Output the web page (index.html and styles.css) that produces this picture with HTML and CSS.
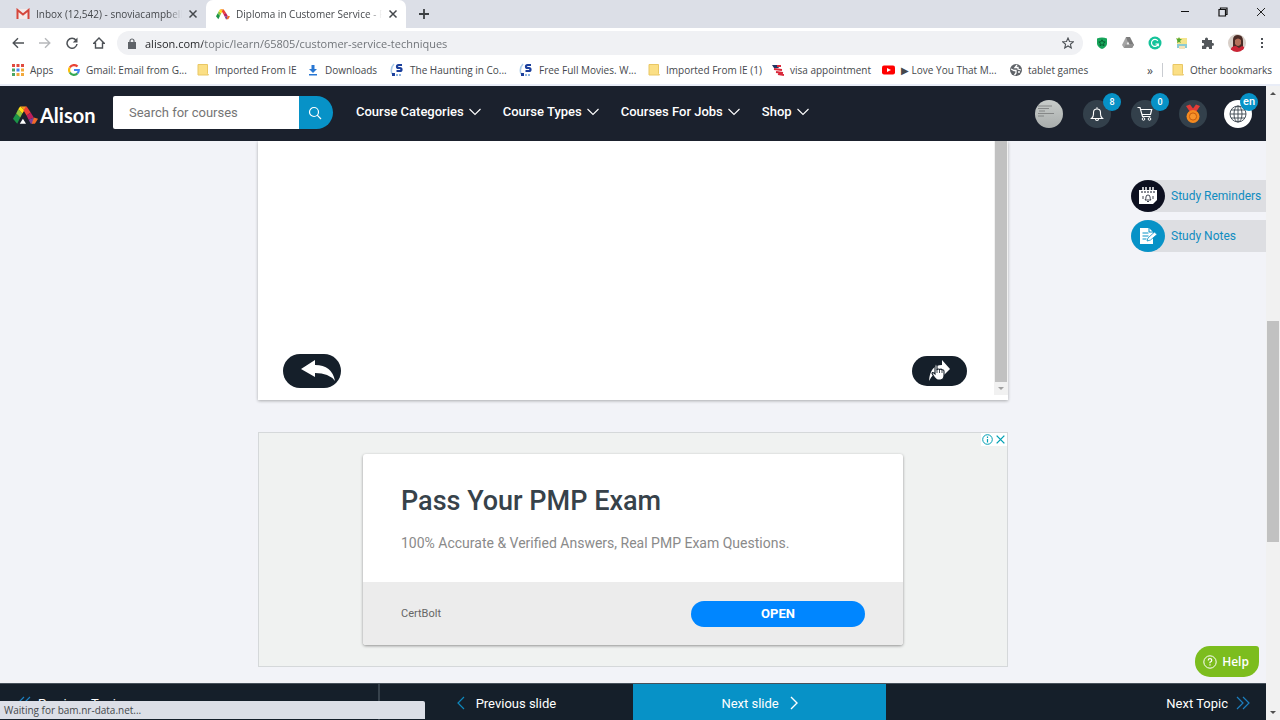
FILE: index.html
```
<!DOCTYPE html>
<html lang="en">
<head>
    <meta charset="UTF-8">
    <meta name="viewport" content="width=device-width, initial-scale=1.0">
    <title>Diploma in Customer Service</title>
    <link rel="stylesheet" href="styles.css">
</head>
<body>
    <!-- Shared symbols -->
    <svg class="symbols" aria-hidden="true">
        <symbol id="i-alison" viewBox="0 0 24 18">
            <path fill="#1b9447" d="M0 12l3-5 4 4-3 6z"/>
            <path fill="#8cc63f" d="M3 7l2-4 4 4-2 4z"/>
            <path fill="#ffde17" d="M5 3l2-3 4 4-2 3z"/>
            <path fill="#f7941e" d="M7 0h6l-2 4z"/>
            <path fill="#ef4136" d="M13 0l4 6-4 3-3-5z"/>
            <path fill="#be1e5b" d="M17 6l3 5-5 2-2-4z"/>
            <path fill="#7b3f98" d="M15 13l5-2-1 6h-2z"/>
            <path fill="#f26a2a" d="M20 11l4 1-3 5h-3z"/>
        </symbol>
        <symbol id="i-folder" viewBox="0 0 12 12">
            <path fill="#fbdf85" stroke="#e9c764" d="M1 .5h9.5v9l1 1.500H1z"/>
        </symbol>
        <symbol id="i-solar" viewBox="0 0 14 14">
            <path d="M4 1Q0 5 2 11" fill="none" stroke="#a9cbe8" stroke-width="1.500"/>
            <path d="M12 2H8.500Q7 2 7 3.500T8.500 5h1.500Q11.500 5 11.500 6.500T10 8H6.500" fill="none" stroke="#1b3f9c" stroke-width="2.200"/>
            <path fill="#1b3f9c" d="M2 10h3v3H2z"/>
            <path fill="#8fb6e0" d="M6 11h2v2H6zM9 11h2v2H9z"/>
        </symbol>
        <symbol id="i-down" viewBox="0 0 12 8">
            <path d="M.5 1L6 6.500 11.500 1" fill="none" stroke="currentColor" stroke-width="1.100"/>
        </symbol>
        <symbol id="i-close" viewBox="0 0 10 10">
            <path d="M1.500 1.500l7 7M8.500 1.500l-7 7" stroke="currentColor" stroke-width="1.500"/>
        </symbol>
    </svg>

    <!-- Browser chrome -->
    <div class="browser">
        <div class="tabs">
            <div class="tab">
                <svg width="14" height="12" viewBox="0 0 14 12"><path fill="#f3e9e8" d="M1 1h12v10H1z"/><path d="M1.500 11V2L7 6.500 12.500 2v9" fill="none" stroke="#d5463b" stroke-width="2"/></svg>
                <span class="tab-title">Inbox (12,542) - snoviacampbell@</span>
                <button class="tab-close" aria-label="Close tab"><svg width="10" height="10"><use href="#i-close"/></svg></button>
            </div>
            <div class="tab active">
                <svg width="14" height="11"><use href="#i-alison"/></svg>
                <span class="tab-title">Diploma in Customer Service - Re</span>
                <button class="tab-close" aria-label="Close tab"><svg width="10" height="10"><use href="#i-close"/></svg></button>
            </div>
            <button class="new-tab" aria-label="New tab"><svg width="12" height="12" viewBox="0 0 12 12"><path d="M6 1v10M1 6h10" stroke="#3c4043" stroke-width="1.800"/></svg></button>
            <div class="window-buttons">
                <button aria-label="Minimize"><svg width="10" height="10" viewBox="0 0 10 10"><path d="M1 4.500h8" stroke="#111"/></svg></button>
                <button aria-label="Restore"><svg width="10" height="10" viewBox="0 0 10 10"><path d="M1 2.500h6.500v6.500H1zM2.500 2.500V1h6.500v6.500H7.500" fill="none" stroke="#111" stroke-width="1.200"/></svg></button>
                <button aria-label="Close"><svg width="10" height="10" viewBox="0 0 10 10"><path d="M1 1l8 8M9 1L1 9" stroke="#222"/></svg></button>
            </div>
        </div>

        <div class="toolbar">
            <div class="history">
                <button aria-label="Back"><svg width="12" height="12" viewBox="0 0 12 12"><path d="M12 6H1.500M6 1.200L1.200 6 6 10.800" fill="none" stroke="#4d5156" stroke-width="1.400"/></svg></button>
                <button aria-label="Forward"><svg width="12" height="12" viewBox="0 0 12 12"><path d="M0 6h10.500M6 1.200L10.800 6 6 10.800" fill="none" stroke="#b6b8bb" stroke-width="1.400"/></svg></button>
                <button aria-label="Reload"><svg width="12" height="12" viewBox="0 0 12 12"><path d="M10 3.200A5 5 0 1 0 11 7" fill="none" stroke="#4d5156" stroke-width="1.500"/><path fill="#4d5156" d="M11.500.5v5H6.800z"/></svg></button>
                <button aria-label="Home"><svg width="12" height="12" viewBox="0 0 12 12"><path d="M.8 6.200L6 1l5.200 5.200H9.500V11h-7V6.200z" fill="none" stroke="#4d5156" stroke-width="1.400"/></svg></button>
            </div>
            <div class="address">
                <svg width="8" height="11" viewBox="0 0 8 11"><path fill="#5f6368" d="M0 4h8v7H0z"/><path d="M2 4.500V3a2 2 0 0 1 4 0v1.500" fill="none" stroke="#5f6368" stroke-width="1.200"/></svg>
                <input class="url" type="text" aria-label="Address" value="alison.com/topic/learn/65805/customer-service-techniques">
                <button aria-label="Bookmark this page"><svg width="12" height="12" viewBox="0 0 12 12"><path d="M6 1l1.500 3.500 3.800.3-2.900 2.500.9 3.700L6 9l-3.300 2 .9-3.700L.7 4.800l3.800-.3z" fill="none" stroke="#4d5156" stroke-width="1.100"/></svg></button>
            </div>
            <div class="extensions">
                <button aria-label="Shield"><svg width="12" height="12" viewBox="0 0 12 12"><path fill="#17a55b" d="M1 1.500Q6-.5 11 1.500V7q-1 3.500-5 5Q2 10.500 1 7z"/><path d="M6 2.800l1 2 2.200.2-1.600 1.500.4 2.200-2-1.100-2 1.100.4-2.200L2.800 5 5 4.800z" fill="none" stroke="#075e31"/></svg></button>
                <button aria-label="Drive"><svg width="12" height="12" viewBox="0 0 12 12"><path fill="#a5a5a5" d="M4 0h4L4 11H2L0 8z"/><path fill="#7b7b7b" d="M4 0h4l4 8-2 3H8z"/><path fill="#909090" d="M2 11l2-4h8l-2 4z"/><path fill="#eee" d="M6 4.500L7.500 7.500h-3z"/></svg></button>
                <button aria-label="Grammarly"><svg width="14" height="14" viewBox="0 0 14 14"><circle cx="7" cy="7" r="6.500" fill="#15c39a"/><path d="M9.800 4.800A3.500 3.500 0 1 0 10.300 8H7.500M10.300 7.500v2.800" fill="none" stroke="#fff" stroke-width="1.200"/></svg></button>
                <button aria-label="Pictures"><svg width="12" height="12" viewBox="0 0 12 12"><path fill="#f4e58d" d="M1 1h10v6H1z"/><path fill="#8ccbd3" d="M1 7h10v4H1z"/><path fill="#f3e3ba" d="M3 9h6v3H3z"/><path fill="#56a832" d="M0 1l2 1 1-2 1 2h2L4 4l1 2-2-1-2 1 .5-2z"/></svg></button>
                <button aria-label="Extensions"><svg width="12" height="12" viewBox="0 0 12 12"><path fill="#53575b" d="M0 3h3V2a1.500 1.500 0 0 1 3 0v1h4v3h.6a1.400 1.400 0 0 1 0 2.800H10V12H7v-.8a1.400 1.400 0 0 0-2.800 0v.8H0V8.800h.8a1.400 1.400 0 0 0 0-2.800H0z"/></svg></button>
                <button aria-label="Profile"><svg width="18" height="18" viewBox="0 0 18 18"><clipPath id="face"><circle cx="9" cy="9" r="9"/></clipPath><g clip-path="url(#face)"><path fill="#d8cfc8" d="M0 0h18v18H0z"/><path fill="#4a2b26" d="M5 14V6q0-5 5-5t5 6v7z"/><path fill="#b5705a" d="M7 6q3-3 6 0v4q-3 4-6 0z"/><path fill="#cc2436" d="M2 18q1-7 6-6l3 2 3-2q3 0 3 6z"/></g></svg></button>
                <button aria-label="Menu"><svg width="4" height="12" viewBox="0 0 4 12"><path fill="#4d5156" d="M1 1h2v2H1zM1 5h2v2H1zM1 9h2v2H1z"/></svg></button>
            </div>
        </div>

        <nav class="bookmarks" aria-label="Bookmarks">
            <a href="#"><svg width="12" height="12" viewBox="0 0 12 12"><path fill="#e04a3f" d="M0 0h3v3H0zM4.500 0h3v3h-3zM9 0h3v3H9z"/><path fill="#4aa564" d="M0 4.500h3v3H0z"/><path fill="#4285f4" d="M4.500 4.500h3v3h-3z"/><path fill="#f2a93b" d="M9 4.500h3v3H9zM4.500 9h3v3h-3zM9 9h3v3H9z"/><path fill="#4aa564" d="M0 9h3v3H0z"/></svg>Apps</a>
            <a href="#"><svg width="12" height="12" viewBox="0 0 12 12"><g fill="none" stroke-width="2.200"><path stroke="#ea4335" d="M1.800 3.500A4.800 4.800 0 0 1 9.500 2.600"/><path stroke="#fbbc05" d="M1.800 8.500a5 5 0 0 1 0-5"/><path stroke="#34a853" d="M9.500 9.300a4.800 4.800 0 0 1-7.700-.8"/><path stroke="#4285f4" d="M6 6h4.800q0 2-1.300 3.300"/></g></svg>Gmail: Email from G...</a>
            <a href="#"><svg width="12" height="12"><use href="#i-folder"/></svg>Imported From IE</a>
            <a href="#"><svg width="12" height="12" viewBox="0 0 12 12"><path fill="#2877d3" d="M4.500 1h3v4H10L6 9 2 5h2.500zM2 10h8v1.500H2z"/></svg>Downloads</a>
            <a href="#"><svg width="14" height="14"><use href="#i-solar"/></svg>The Haunting in Co...</a>
            <a href="#"><svg width="14" height="14"><use href="#i-solar"/></svg>Free Full Movies. W...</a>
            <a href="#"><svg width="12" height="12"><use href="#i-folder"/></svg>Imported From IE (1)</a>
            <a href="#"><svg width="12" height="12" viewBox="0 0 12 12"><path fill="#1e3565" d="M0 1h5l2 3H2z"/><path d="M5 2h4M2 5l8 1M4 8l7 1M6 10l6 1" stroke="#d9293b" stroke-width="1.800"/></svg>visa appointment</a>
            <a href="#"><svg width="13" height="12" viewBox="0 0 13 12"><rect y="1.500" width="13" height="9" rx="2" fill="#f00"/><path fill="#fff" d="M5 4l4 2-4 2z"/></svg>&#9654; Love You That M...</a>
            <a href="#"><svg width="12" height="12" viewBox="0 0 12 12"><circle cx="6" cy="6" r="6" fill="#5f6368"/><path d="M1 5l3 1.500h2V9L4.500 11M7 1L5 3.500h3V5l3 1M8 8h2" fill="none" stroke="#fff" stroke-width="1.300"/></svg>tablet games</a>
            <button class="more" aria-label="More bookmarks">&raquo;</button>
            <a class="other" href="#"><svg width="12" height="12"><use href="#i-folder"/></svg>Other bookmarks</a>
        </nav>
    </div>

    <div class="window">
        <div class="page">
            <header class="site-header">
                <a class="logo" href="#"><svg width="25" height="19" viewBox="0 0 24 18"><use href="#i-alison"/><path fill="#fff" d="M9.500 12l3 5h-6z"/></svg>Alison</a>
                <form class="search">
                    <input type="text" placeholder="Search for courses" aria-label="Search for courses">
                    <button type="button" aria-label="Search"><svg width="14" height="14" viewBox="0 0 14 14"><circle cx="6" cy="6" r="4.500" fill="none" stroke="#fff" stroke-width="1.200"/><path d="M9.200 9.200l3.800 3.800" stroke="#fff" stroke-width="1.200"/></svg></button>
                </form>
                <nav class="menu">
                    <a href="#">Course Categories<svg width="12" height="8"><use href="#i-down"/></svg></a>
                    <a href="#">Course Types<svg width="12" height="8"><use href="#i-down"/></svg></a>
                    <a href="#">Courses For Jobs<svg width="12" height="8"><use href="#i-down"/></svg></a>
                    <a href="#">Shop<svg width="12" height="8"><use href="#i-down"/></svg></a>
                </nav>
                <div class="account">
                    <button class="round avatar" aria-label="Profile"><svg width="28" height="28" viewBox="0 0 28 28"><path d="M3 6h14M3 8.500h11M4 11h6M3 13.500h16M3 16h6" stroke="#77797a" stroke-width=".8"/></svg></button>
                    <button class="round" aria-label="Notifications"><svg width="14" height="16" viewBox="0 0 14 16"><path d="M1.500 12.500q2-1.500 2-4.500V6.500Q3.500 3 7 3t3.500 3.500V8q0 3 2 4.500zM5.500 13a1.500 1.500 0 0 0 3 0M7 3V1.200" fill="none" stroke="#fff" stroke-width="1.100"/></svg><span class="badge">8</span></button>
                    <button class="round" aria-label="Cart"><svg width="16" height="16" viewBox="0 0 16 16"><path d="M.5 1.500h2.500l2.500 9h8M3.700 3.500h11L13.500 8.500H5" fill="none" stroke="#fff" stroke-width="1.200"/><circle cx="6.500" cy="13" r="1.300" fill="none" stroke="#fff"/><circle cx="12.500" cy="13" r="1.300" fill="none" stroke="#fff"/></svg><span class="badge">0</span></button>
                    <button class="round" aria-label="Awards"><svg width="16" height="20" viewBox="0 0 16 20"><path fill="#e23c37" d="M1 2l4-1.500 3 4 3-4L15 2l-4 6H5z"/><circle cx="8" cy="12.500" r="6.500" fill="#f58a1f"/><circle cx="8" cy="12.500" r="3.600" fill="#f7942b" stroke="#c65d10"/></svg></button>
                    <button class="round language" aria-label="Language"><svg width="18" height="18" viewBox="0 0 18 18"><g fill="none" stroke="#39434d" stroke-width=".9"><circle cx="9" cy="9" r="8"/><ellipse cx="9" cy="9" rx="4" ry="8"/><path d="M9 1v16M1 9h16M2 5h14M2 13h14"/></g></svg><span class="badge wide">en</span></button>
                </div>
            </header>

            <main class="content">
                <section class="slide">
                    <div class="slide-body">
                        <button class="turn back" aria-label="Back"><svg width="34" height="22" viewBox="0 0 34 22"><path fill="#fff" d="M0 9L14 0v5q17 0 20 16-6-8-20-8v4z"/></svg></button>
                        <button class="turn next" aria-label="Next"><svg width="26" height="26" viewBox="0 0 26 26"><path fill="#fff" d="M2 23Q3 7 15 7V2l8 9-8 8v-5Q6 14 2 23z"/><path fill="#fff" stroke="#151f2a" stroke-width="1.100" d="M8 7q1.500-1 2 .5v4q2-1 2.500 0 2-1 2.500.5 2-.5 2 1.500v4q0 4-3.500 4.500h-3Q8 21 5 15.500q0-1.500 2-.5l1 1z"/><path d="M10 11v4M12.500 12v3M15 12.500V15" stroke="#151f2a" stroke-width=".8"/></svg></button>
                    </div>
                    <div class="slide-scroll"><span></span><i class="arrow-down"></i></div>
                </section>

                <section class="ad">
                    <div class="ad-marks">
                        <button aria-label="Ad information"><svg width="11" height="11" viewBox="0 0 11 11"><circle cx="5.500" cy="5.500" r="4.800" fill="none" stroke="#00a0b4"/><path d="M5.500 5v3.500M5.500 2.500V4" stroke="#00a0b4" stroke-width="1.200"/></svg></button>
                        <button aria-label="Close ad"><svg width="11" height="11" viewBox="0 0 10 10"><path d="M1.500 1.500l7 7M8.500 1.500l-7 7" stroke="#00a0b4" stroke-width="1.200"/></svg></button>
                    </div>
                    <div class="ad-card">
                        <div class="ad-text">
                            <h2>Pass Your PMP Exam</h2>
                            <p>100% Accurate &amp; Verified Answers, Real PMP Exam Questions.</p>
                        </div>
                        <div class="ad-foot">
                            <span>CertBolt</span>
                            <button>OPEN</button>
                        </div>
                    </div>
                </section>
            </main>

            <nav class="slide-nav">
                <a class="first" href="#"><svg width="14" height="14" viewBox="0 0 14 14"><path d="M7 1L1 7l6 6M13 1L7 7l6 6" fill="none" stroke="#1c7fc0" stroke-width="1.200"/></svg>Previous Topic</a>
                <a href="#"><svg width="8" height="14" viewBox="0 0 8 14"><path d="M7 1L1 7l6 6" fill="none" stroke="#0f88bd" stroke-width="1.200"/></svg>Previous slide</a>
                <a class="current" href="#">Next slide<svg width="8" height="14" viewBox="0 0 8 14"><path d="M1 1l6 6-6 6" fill="none" stroke="#fff" stroke-width="1.400"/></svg></a>
                <a class="last" href="#">Next Topic<svg width="14" height="14" viewBox="0 0 14 14"><path d="M1 1l6 6-6 6M7 1l6 6-6 6" fill="none" stroke="#1c7fc0" stroke-width="1.200"/></svg></a>
            </nav>

            <div class="study">
                <a href="#"><span class="study-icon dark"><svg width="20" height="20" viewBox="0 0 20 20"><path fill="#fff" d="M1 4h18v10l-4 4H1z"/><path d="M5 1v4M8 1v4M12 1v4M15 1v4" stroke="#fff" stroke-width="1.500"/><path d="M3 6h14" stroke="#111627" stroke-width="1" stroke-dasharray="2 1"/><path d="M7 14q1-1 1-3t2-2 2 2 1 3zM9 15.500h2M5 10v3M15 10v3" fill="none" stroke="#111627" stroke-width=".8"/></svg></span>Study Reminders</a>
                <a href="#"><span class="study-icon"><svg width="18" height="18" viewBox="0 0 18 18"><path fill="#fff" d="M1 1h9l4 4v12H1z"/><path d="M3.500 6h6M3.500 9h6M3.500 12h4M10 1v4h4" fill="none" stroke="#0792c7"/><path fill="#fff" stroke="#0792c7" stroke-width=".8" d="M8 14l1-3 6.500-6L18 7.500 11.500 13z"/></svg></span>Study Notes</a>
            </div>

            <button class="help"><svg width="14" height="14" viewBox="0 0 14 14"><circle cx="7" cy="7" r="6.200" fill="none" stroke="#fff"/><path d="M5.200 5.500q0-1.800 1.800-1.800t1.800 1.500Q8.800 6.500 7 7.200v1M7 9.300v1.300" fill="none" stroke="#fff" stroke-width="1.200"/></svg>Help</button>
            <div class="status">Waiting for bam.nr-data.net...</div>
        </div>

        <div class="scrollbar">
            <i class="arrow-up"></i>
            <div class="track"><span></span></div>
            <i class="arrow-down dark"></i>
        </div>
    </div>
</body>
</html>
```
FILE: styles.css
```
/* Base styles */
* {
    box-sizing: border-box;
}

body {
    margin: 0;
    height: 100vh;
    display: flex;
    flex-direction: column;
    overflow: hidden;
    font-family: Roboto, "Liberation Sans", sans-serif;
    font-size: 13px;
    color: #fff;
}

a {
    color: inherit;
    text-decoration: none;
}

button {
    display: flex;
    align-items: center;
    justify-content: center;
    padding: 0;
    border: none;
    background: none;
    color: inherit;
    font: inherit;
    cursor: pointer;
}

svg {
    display: block;
    flex: none;
}

.symbols {
    display: none;
}

/* Browser chrome */
.browser {
    border-bottom: 2px solid #e9edf7;
    background: #fff;
    color: #45484c;
    font-family: "Open Sans", "Noto Sans", sans-serif;
    font-size: 10px;
}

.tabs {
    display: flex;
    height: 28px;
    padding-left: 8px;
    background: #dcdfe7;
}

.tab {
    display: flex;
    align-items: center;
    width: 198px;
    padding: 0 8px;
    gap: 6px;
}

.tab.active {
    width: 200px;
    padding-left: 10px;
    border-radius: 7px 7px 0 0;
    background: #fff;
}

.tab-title {
    flex: 1;
    overflow: hidden;
    white-space: nowrap;
    -webkit-mask-image: linear-gradient(90deg, #000 90%, transparent);
    mask-image: linear-gradient(90deg, #000 90%, transparent);
}

.new-tab {
    width: 36px;
}

.window-buttons {
    display: flex;
    align-items: center;
    gap: 28px;
    height: 24px;
    margin-left: auto;
    padding-right: 14px;
}

.toolbar {
    display: flex;
    align-items: center;
    height: 30px;
    padding: 0 16px 0 12px;
}

.history {
    display: flex;
    gap: 15px;
    margin-right: 12px;
}

.address {
    flex: 1;
    display: flex;
    align-items: center;
    gap: 9px;
    height: 24px;
    padding: 0 9px 0 11px;
    border-radius: 12px;
    background: #f0f1f4;
}

.url {
    flex: 1;
    padding: 0;
    border: none;
    outline: none;
    background: linear-gradient(90deg, #202124 58px, #6a6e73 58px);
    -webkit-background-clip: text;
    background-clip: text;
    color: transparent;
    font: inherit;
    font-size: 11px;
}

.extensions {
    display: flex;
    align-items: center;
    gap: 14px;
    margin-left: 13px;
}

.bookmarks {
    display: grid;
    grid-template-columns: 56px 129px 110px 83px 129px 129px 124px 110px 128px 1fr 24px 118px;
    align-items: center;
    height: 26px;
    padding: 0 0 2px 12px;
    white-space: nowrap;
}

.bookmarks a {
    display: flex;
    align-items: center;
    gap: 6px;
}

.bookmarks .other {
    height: 14px;
    padding-left: 9px;
    border-left: 1px solid #c9ccd1;
}

.more {
    font-size: 12px;
}

/* Window */
.window {
    flex: 1;
    display: flex;
    min-height: 0;
}

.page {
    position: relative;
    flex: 1;
    display: flex;
    flex-direction: column;
    min-width: 0;
    background: #f2f3f8;
}

.scrollbar {
    display: flex;
    flex-direction: column;
    align-items: center;
    justify-content: space-between;
    width: 14px;
    padding: 6px 0;
    background: #f1f1f1;
}

.track {
    flex: 1;
    display: flex;
    flex-direction: column;
    width: 12px;
}

.track::before {
    content: "";
    flex: 225;
}

.track::after {
    content: "";
    flex: 168;
}

.track span {
    flex: 220;
    background: #c1c1c1;
}

.arrow-up,
.arrow-down {
    border: 3px solid transparent;
}

.arrow-up {
    border-top: 0;
    border-bottom-color: #505050;
}

.arrow-down {
    border-bottom: 0;
    border-top-color: #a0a0a0;
}

.arrow-down.dark {
    border-top-color: #505050;
}

/* Site header */
.site-header {
    display: flex;
    align-items: center;
    height: 55px;
    padding: 0 14px 0 13px;
    background: #1b212d;
}

.logo {
    display: flex;
    align-items: center;
    gap: 2px;
    width: 100px;
    padding-top: 3px;
    font-family: Lato, sans-serif;
    font-size: 20px;
    font-weight: 700;
    line-height: 24px;
}

.search {
    display: flex;
    height: 33px;
    margin-bottom: 2px;
}

.search input {
    width: 186px;
    padding: 0 16px;
    border: none;
    border-radius: 2px 0 0 2px;
    background: #fff;
    font: inherit;
}

.search input::placeholder {
    color: #757575;
}

.search button {
    width: 34px;
    padding-right: 3px;
    border-radius: 0 17px 17px 0;
    background: #0792c7;
}

.menu {
    display: flex;
    gap: 22px;
    margin: 0 0 4px 23px;
    font-weight: 500;
    white-space: nowrap;
}

.menu a {
    display: flex;
    align-items: center;
    gap: 5px;
}

.account {
    display: flex;
    gap: 20px;
    margin-left: auto;
}

.round {
    position: relative;
    width: 28px;
    height: 28px;
    border-radius: 50%;
    background: #33404b;
}

.avatar {
    background: linear-gradient(#c8ccca, #a9adac);
}

.language {
    margin-left: -3px;
    background: #fff;
}

.badge {
    position: absolute;
    top: -7px;
    right: -10px;
    width: 18px;
    height: 18px;
    border-radius: 50%;
    background: #0792c7;
    font-size: 9px;
    font-weight: 500;
    line-height: 18px;
    text-align: center;
}

.badge.wide {
    right: -6px;
    font-size: 11px;
}

/* Slide and ad */
.content {
    flex: 1;
    display: flex;
    flex-direction: column;
    gap: 32px;
    width: 750px;
    max-width: 100%;
    min-height: 0;
    margin: 0 auto;
}

.slide {
    display: flex;
    height: 259px;
    background: #fff;
    box-shadow: 0 1px 3px rgba(0, 0, 0, 0.3);
    clip-path: inset(0 -4px -4px);
}

.slide-body {
    flex: 1;
    display: flex;
    align-items: flex-end;
    justify-content: space-between;
    padding: 0 27px 12px 25px;
}

.turn {
    border-radius: 17px;
    background: #151f2a;
}

.turn.back {
    width: 58px;
    height: 34px;
    padding-left: 12px;
}

.turn.next {
    width: 55px;
    height: 30px;
    margin-bottom: 2px;
}

.slide-scroll {
    display: flex;
    flex-direction: column;
    align-items: center;
    gap: 5px;
    width: 14px;
    height: 254px;
    padding-bottom: 5px;
    background: #f1f1f1;
}

.slide-scroll span {
    flex: 1;
    width: 12px;
    background: #c1c1c1;
}

.ad {
    position: relative;
    height: 235px;
    padding-top: 21px;
    border: 1px solid #d5d8da;
    background: #f0f2f1;
}

.ad-marks {
    position: absolute;
    top: 0;
    right: 0;
    display: flex;
    gap: 2px;
    padding: 1px;
    background: #fff;
}

.ad-card {
    width: 540px;
    max-width: 100%;
    margin: 0 auto;
    border-radius: 3px;
    background: #fff;
    box-shadow: 0 1px 3px rgba(0, 0, 0, 0.4);
}

.ad-text {
    height: 128px;
    padding: 31px 38px 0;
}

.ad-text h2 {
    margin: 0;
    color: #37424a;
    font-size: 27px;
    font-weight: 500;
    line-height: 32px;
}

.ad-text p {
    margin: 16px 0 0;
    color: #8a8a8a;
    font-size: 14px;
    line-height: 20px;
}

.ad-foot {
    display: flex;
    align-items: center;
    justify-content: space-between;
    height: 63px;
    padding: 0 38px;
    border-radius: 0 0 3px 3px;
    background: #ececec;
    color: #666;
    font-size: 11px;
}

.ad-foot button {
    width: 174px;
    height: 26px;
    border-radius: 13px;
    background: #0086ff;
    color: #fff;
    font-size: 13px;
    font-weight: 700;
}

/* Bottom navigation */
.slide-nav {
    display: grid;
    grid-template-columns: 3fr 2fr 2fr 3fr;
    height: 37px;
    border-top: 1px solid #47515b;
    background: #151f2a;
}

.slide-nav a {
    display: flex;
    align-items: center;
    justify-content: center;
    gap: 11px;
    padding-top: 2px;
}

.slide-nav .first {
    justify-content: flex-start;
    gap: 7px;
    padding-left: 17px;
    border-right: 2px solid #37424c;
}

.slide-nav .current {
    background: #0792c7;
}

.slide-nav .last {
    justify-content: flex-end;
    gap: 8px;
    padding-right: 16px;
}

/* Floating widgets */
.study {
    position: absolute;
    top: 94px;
    right: 0;
    display: grid;
    gap: 8px;
    width: 135px;
    color: #0f8cc0;
    font-size: 12px;
}

.study a {
    display: flex;
    align-items: center;
    gap: 6px;
    height: 32px;
    border-radius: 16px 0 0 16px;
    background: #dddee2;
    white-space: nowrap;
}

.study-icon {
    display: flex;
    align-items: center;
    justify-content: center;
    width: 34px;
    height: 32px;
    border-radius: 50%;
    background: #0792c7;
}

.study-icon.dark {
    background: #0d1020;
}

.help {
    position: absolute;
    right: 7px;
    bottom: 43px;
    gap: 5px;
    width: 64px;
    height: 31px;
    padding-right: 2px;
    border-radius: 15px 3px 15px 15px;
    background: #7cbd1e;
    font-family: "Open Sans", sans-serif;
    font-size: 12px;
    font-weight: 600;
}

.status {
    position: absolute;
    left: 0;
    bottom: 1px;
    width: 425px;
    height: 18px;
    padding-left: 4px;
    border-top-right-radius: 2px;
    background: #dcdfe7;
    color: #45484c;
    font-family: "Open Sans", "Noto Sans", sans-serif;
    font-size: 10px;
    line-height: 18px;
}
```
